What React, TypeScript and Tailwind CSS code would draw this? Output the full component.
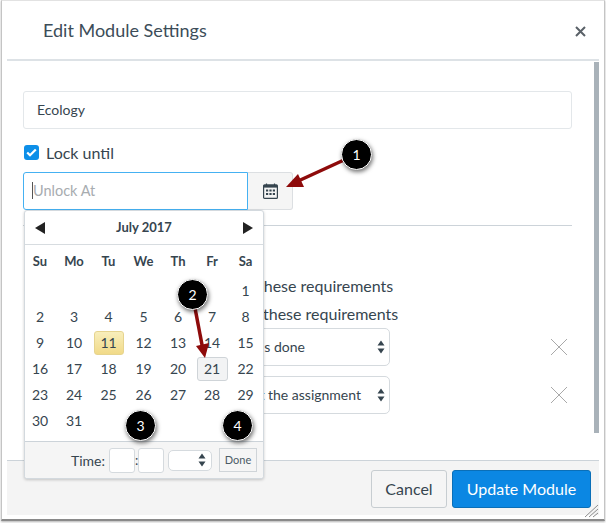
import React from "react";

const weeks: (number | null)[][] = [
  [null, null, null, null, null, null, 1],
  [2, 3, 4, 5, 6, 7, 8],
  [9, 10, 11, 12, 13, 14, 15],
  [16, 17, 18, 19, 20, 21, 22],
  [23, 24, 25, 26, 27, 28, 29],
  [30, 31, null, null, null, null, null],
];
const days = ["Su", "Mo", "Tu", "We", "Th", "Fr", "Sa"];

function Updown({ className = "" }: { className?: string }) {
  return (
    <svg width="8" height="14" viewBox="0 0 8 14" className={className}>
      <path d="M4 0.5 L7.5 5.5 H0.5 Z M0.5 8.5 H7.5 L4 13.5 Z" fill="#36454f" />
    </svg>
  );
}

function ThinX() {
  return (
    <svg width="18" height="18" viewBox="0 0 18 18" className="shrink-0">
      <path d="M1 1 L17 17 M17 1 L1 17" stroke="#a9a9a9" strokeWidth="1" fill="none" />
    </svg>
  );
}

function Callout({ n, x, y }: { n: number; x: string; y: string }) {
  return (
    <div
      className={`absolute ${x} ${y} w-[31px] h-[31px] rounded-full bg-black border border-white text-white text-[14px] flex items-center justify-center shadow-[1px_2px_4px_rgba(0,0,0,0.55)]`}
    >
      {n}
    </div>
  );
}

function DatePicker() {
  return (
    <div className="absolute left-[24px] top-[210px] w-[240px] h-[269px] bg-white border border-[#d3d9de] rounded-[3px] shadow-[0_1px_3px_rgba(0,0,0,0.2)] flex flex-col text-[#36454f]">
      <div className="h-[34px] shrink-0 flex items-center justify-between px-[10px] border-b border-[#d7dce0]">
        <svg width="10" height="12" viewBox="0 0 10 12">
          <path d="M10 0 V12 L0 6 Z" fill="#222" />
        </svg>
        <span className="text-[13px] font-bold">July 2017</span>
        <svg width="10" height="12" viewBox="0 0 10 12">
          <path d="M0 0 V12 L10 6 Z" fill="#222" />
        </svg>
      </div>
      <div className="grid grid-cols-[34px_34px_35px_35px_34px_34px_33px] -ml-[2px] h-[33px] items-center text-[13px] font-bold text-center">
        {days.map((d) => (
          <span key={d}>{d}</span>
        ))}
      </div>
      <div className="grid grid-cols-[34px_34px_35px_35px_34px_34px_33px] -ml-[2px] auto-rows-[26px] text-[14px] text-center -mt-[1px] grow">
        {weeks.flat().map((d, i) => (
          <div key={i} className="flex items-center justify-center">
            {d === 11 ? (
              <span className="mt-[1px] w-[30px] h-[24px] flex items-center justify-center rounded-[3px] border border-[#e6d48f] bg-gradient-to-b from-[#f8eebb] to-[#f1da88]">
                {d}
              </span>
            ) : d === 21 ? (
              <span className="mt-[1px] w-[31px] h-[24px] flex items-center justify-center rounded-[3px] border border-[#cfd4d8] bg-[#f2f3f4]">
                {d}
              </span>
            ) : (
              d
            )}
          </div>
        ))}
      </div>
      <div className="h-[37px] shrink-0 bg-[#f5f5f5] border-t border-[#ccd3d9] flex items-center pl-[46px] rounded-b-[3px]">
        <span className="text-[14px] w-[38px]">Time:</span>
        <span className="w-[26px] h-[25px] bg-white border border-[#d5dade] rounded-[3px]" />
        <span className="w-[3px] text-[13px] text-center leading-none">:</span>
        <span className="w-[26px] h-[25px] bg-white border border-[#d5dade] rounded-[3px]" />
        <span className="ml-[4px] w-[44px] h-[21px] bg-white border border-[#d5dade] rounded-[5px] flex items-center justify-end pr-[5px]">
          <Updown />
        </span>
        <span className="ml-[7px] w-[38px] h-[24px] bg-[#f5f5f5] border border-[#cfd4d8] flex items-center justify-center text-[11px] text-[#4b5b66]">
          Done
        </span>
      </div>
    </div>
  );
}

export default function App() {
  return (
    <div
      className="relative w-[606px] h-[523px] bg-white overflow-hidden text-[#36454f]"
      style={{ fontFamily: '"Lato", "Open Sans", sans-serif' }}
    >
      <div className="ml-[1px] w-[604px] h-[521px] border border-t-[#e2e2e2] border-x-[#c4c4c4] border-b-[#8a8a8a] border-b-2 shadow-[0_1px_2px_rgba(0,0,0,0.3)] px-[5px] pb-[4px] flex flex-col">
        <div className="h-[60px] shrink-0 border-b-2 border-[#dde2e6] flex items-center justify-between pl-[36px] pr-[13px]">
          <h2 className="text-[18px] text-[#3c4d59]">Edit Module Settings</h2>
          <svg width="11" height="11" viewBox="0 0 11 11" className="mt-[2px]">
            <path d="M1 1 L10 10 M10 1 L1 10" stroke="#5a6168" strokeWidth="2" fill="none" />
          </svg>
        </div>

        <div className="relative grow flex flex-col pl-[16px] pr-[27px] pt-[30px]">
          <div className="h-[38px] shrink-0 border border-[#e3e7ea] rounded-[3px] flex items-center pl-[13px] pb-[1px] text-[14px]">
            Ecology
          </div>
          <label className="mt-[15px] h-[17px] flex items-center gap-[7px] text-[16px]">
            <span className="ml-[1px] w-[15px] h-[15px] rounded-[3px] bg-[#0d8fe8] flex items-center justify-center">
              <svg width="11" height="9" viewBox="0 0 11 9">
                <path d="M1.2 4.5 L4 7.3 L9.8 1.4" stroke="#fff" strokeWidth="2.2" fill="none" />
              </svg>
            </span>
            Lock until
          </label>
          <div className="mt-[11px] flex h-[38px] shrink-0">
            <div className="w-[225px] border border-[#45b1f2] rounded-l-[3px] flex items-center pl-[8px] pb-[1px] text-[14.5px] text-[#a7acb0]">
              <span className="w-px h-[17px] bg-[#555]" />
              Unlock At
            </div>
            <div className="w-[45px] bg-[#f5f5f5] border border-l-0 border-[#dcdfe2] rounded-r-[3px] flex items-center justify-center">
              <svg width="15" height="16" viewBox="0 0 15 16">
                <path d="M3.5 0.5 V3 M11.5 0.5 V3" stroke="#36454f" strokeWidth="1.2" />
                <rect x="0.6" y="1.8" width="13.8" height="13.6" rx="1" fill="none" stroke="#36454f" strokeWidth="1.2" />
                <rect x="1" y="2" width="13" height="2.6" fill="#36454f" />
                <path
                  d="M3 6.5h2.2v2H3z M6.4 6.5h2.2v2H6.4z M9.8 6.5H12v2H9.8z M3 10h2.2v2H3z M6.4 10h2.2v2H6.4z M9.8 10H12v2H9.8z"
                  fill="#36454f"
                />
              </svg>
            </div>
          </div>
          <div className="mt-[15px] h-px shrink-0 bg-[#ccd3d9]" />
          <div className="mt-[50px] ml-[235px] text-[16px] leading-[20px] whitespace-nowrap">
            these requirements
          </div>
          <div className="mt-[8px] ml-[240px] text-[16px] leading-[20px] whitespace-nowrap">
            these requirements
          </div>
          <div className="mt-[4px] flex items-center ml-[150px] mr-[4px]">
            <div className="w-[220px] h-[38px] border border-[#d5dade] rounded-[5px] flex items-center justify-end pr-[4px] text-[14px]">
              <span className="mr-[72px] pb-[1px]">s done</span>
              <Updown />
            </div>
            <span className="ml-[160px]">
              <ThinX />
            </span>
          </div>
          <div className="mt-[10px] flex items-center ml-[150px] mr-[4px]">
            <div className="w-[220px] h-[38px] border border-[#d5dade] rounded-[5px] flex items-center justify-end pr-[4px] text-[14px]">
              <span className="mr-[16px] pb-[1px] whitespace-nowrap">t the assignment</span>
              <Updown />
            </div>
            <span className="ml-[160px]">
              <ThinX />
            </span>
          </div>
          <div className="absolute right-0 top-[1px] w-[5px] h-[371px] bg-[#a9b2b9]" />
        </div>

        <div className="h-[55px] shrink-0 bg-[#f4f4f4] border-t border-[#ccd3d9] flex items-center justify-end gap-[5px] pr-[8px] pt-[2px]">
          <button className="w-[76px] h-[38px] bg-[#f5f5f5] border border-[#c7cdd1] rounded-[3px] text-[16px] text-[#36454f]">
            Cancel
          </button>
          <button className="w-[139px] h-[38px] bg-[#0b87e3] border border-[#0a6fb8] rounded-[3px] text-[16px] text-white">
            Update Module
          </button>
        </div>
      </div>

      <DatePicker />

      <svg width="606" height="523" viewBox="0 0 606 523" className="absolute inset-0 pointer-events-none">
        <path d="M344 160 L296 182" stroke="#8e0b0b" strokeWidth="3.5" fill="none" />
        <path d="M286 187 L298 174 L304 187 Z" fill="#8e0b0b" />
        <path d="M195 308 L203 350" stroke="#8e0b0b" strokeWidth="3.5" fill="none" />
        <path d="M205 358 L196 346 L209 343 Z" fill="#8e0b0b" />
        <path d="M585 517 L598 505 M589 517 L598 509 M593 517 L598 513" stroke="#8c8c8c" strokeWidth="1" fill="none" />
      </svg>

      <Callout n={1} x="left-[341px]" y="top-[139px]" />
      <Callout n={2} x="left-[177px]" y="top-[279px]" />
      <Callout n={3} x="left-[125px]" y="top-[410px]" />
      <Callout n={4} x="left-[222px]" y="top-[410px]" />
    </div>
  );
}
